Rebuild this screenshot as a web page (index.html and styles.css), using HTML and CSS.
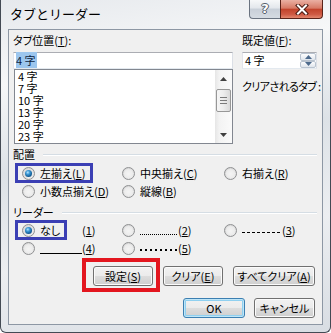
FILE: index.html
```html
<!DOCTYPE html>
<html lang="ja">
<head>
<meta charset="utf-8">
<title>タブとリーダー</title>
<link rel="stylesheet" href="styles.css">
</head>
<body>
<div class="window">
  <div class="titlebar">
    <div class="title">タブとリーダー</div>
    <div class="caption">
      <div class="cap-help">?</div>
      <div class="cap-close">
        <svg width="14" height="11" viewBox="0 0 14 11">
          <path d="M3 1.5 L11 9.5 M11 1.5 L3 9.5" stroke="#4a1a12" stroke-width="4" stroke-linecap="square"/>
          <path d="M3 1.5 L11 9.5 M11 1.5 L3 9.5" stroke="#ffffff" stroke-width="2" stroke-linecap="square"/>
        </svg>
      </div>
    </div>
  </div>
  <div class="client">
    <div class="top">
      <div class="col-left">
        <div class="lbl">タブ位置(<u>T</u>):</div>
        <div class="textbox"><span class="sel">4 字</span></div>
        <div class="listbox">
          <div class="items">
            <div class="item">4 字</div>
            <div class="item">7 字</div>
            <div class="item">10 字</div>
            <div class="item">13 字</div>
            <div class="item">20 字</div>
            <div class="item">23 字</div>
          </div>
          <div class="vscroll">
            <div class="sb-btn"><svg width="7" height="4" viewBox="0 0 7 4"><path d="M0 4 L3.5 0 L7 4 Z" fill="#404040"/></svg></div>
            <div class="sb-track">
              <div class="sb-thumb">
                <svg width="7" height="7" viewBox="0 0 7 7"><path d="M0 0.5 H7 M0 3.5 H7 M0 6.5 H7" stroke="#7a7a7a" stroke-width="1"/></svg>
              </div>
            </div>
            <div class="sb-btn"><svg width="7" height="4" viewBox="0 0 7 4"><path d="M0 0 L3.5 4 L7 0 Z" fill="#404040"/></svg></div>
          </div>
        </div>
      </div>
      <div class="col-right">
        <div class="lbl">既定値(<u>F</u>):</div>
        <div class="spin">
          <span class="spin-val">4 字</span>
          <div class="spin-btns">
            <div class="sp"><svg width="7" height="4" viewBox="0 0 7 4"><path d="M0 4 L3.5 0 L7 4 Z" fill="#4d6a8c"/></svg></div>
            <div class="sp"><svg width="7" height="4" viewBox="0 0 7 4"><path d="M0 0 L3.5 4 L7 0 Z" fill="#4d6a8c"/></svg></div>
          </div>
        </div>
        <div class="note">クリアされるタブ :</div>
      </div>
    </div>

    <div class="group-head"><span>配置</span><i class="rule"></i></div>
    <div class="opts">
      <div class="opt"><span class="radio on"></span><span>左揃え(<u>L</u>)</span></div>
      <div class="opt"><span class="radio"></span><span>中央揃え(<u>C</u>)</span></div>
      <div class="opt"><span class="radio"></span><span>右揃え(<u>R</u>)</span></div>
      <div class="opt"><span class="radio"></span><span>小数点揃え(<u>D</u>)</span></div>
      <div class="opt"><span class="radio"></span><span>縦線(<u>B</u>)</span></div>
    </div>

    <div class="group-head leader-head"><span>リーダー</span><i class="rule"></i></div>
    <div class="opts leader-opts">
      <div class="opt"><span class="radio on"></span><span><span class="ld none">なし</span>(<u>1</u>)</span></div>
      <div class="opt"><span class="radio"></span><span><span class="ld dots"></span>(<u>2</u>)</span></div>
      <div class="opt"><span class="radio"></span><span><span class="ld dashes"></span>(<u>3</u>)</span></div>
      <div class="opt"><span class="radio"></span><span><span class="ld under"></span>(<u>4</u>)</span></div>
      <div class="opt"><span class="radio"></span><span><span class="ld middots"></span>(<u>5</u>)</span></div>
    </div>

    <div class="btn-row row1">
      <div class="btn w60">設定(<u>S</u>)</div>
      <div class="btn w60">クリア(<u>E</u>)</div>
      <div class="btn w82">すべてクリア(<u>A</u>)</div>
    </div>
    <div class="btn-row row2">
      <div class="btn default w62">OK</div>
      <div class="btn w61">キャンセル</div>
    </div>

    <div class="mark blue mark-align"></div>
    <div class="mark blue mark-leader"></div>
    <div class="mark red mark-set"></div>
  </div>
</div>
</body>
</html>
```
FILE: styles.css
```css
html, body {
  margin: 0;
  padding: 0;
}
body {
  width: 331px;
  height: 333px;
  overflow: hidden;
  background: #ffffff;
  font-family: "Noto Sans CJK JP", "Liberation Sans", sans-serif;
  font-size: 11px;
  font-feature-settings: "palt";
  color: #000;
}
u {
  text-decoration: underline;
  text-underline-offset: 1px;
}

.window {
  box-sizing: border-box;
  width: 331px;
  height: 333px;
  border: 1px solid #434a54;
  border-top: none;
  border-radius: 0 0 6px 6px;
  background: linear-gradient(170deg, #e6e9ed 0%, #f6f7f8 22%, #dde2e7 45%, #eceef1 70%, #d8dde3 100%);
  display: flex;
  flex-direction: column;
}

.titlebar {
  flex: none;
  height: 29px;
  display: flex;
  justify-content: space-between;
  align-items: flex-start;
}
.title {
  padding-left: 9px;
  line-height: 28px;
  font-size: 13px;
  font-feature-settings: normal;
}
.caption {
  display: flex;
  margin-right: 7px;
}
.cap-help {
  box-sizing: border-box;
  width: 31px;
  height: 19px;
  border: 1px solid #6a7380;
  border-top: none;
  border-right: none;
  border-radius: 0 0 0 4px;
  background: linear-gradient(#f7f8f9 0%, #e3e7ec 45%, #c8cfd8 50%, #d5dbe2 100%);
  text-align: center;
  font-family: "DejaVu Sans", sans-serif;
  font-size: 13px;
  font-weight: bold;
  line-height: 18px;
  color: #ffffff;
  text-shadow: 0 0 1px #3f4752, 1px 0 0 #5b6470, -1px 0 0 #5b6470, 0 1px 0 #5b6470, 0 -1px 0 #5b6470;
}
.cap-close {
  box-sizing: border-box;
  width: 43px;
  height: 19px;
  border: 1px solid #5a2219;
  border-top: none;
  border-radius: 0 0 4px 0;
  background: linear-gradient(#eab0a3 0%, #d77a66 45%, #c2432c 52%, #cf5a44 80%, #e3876f 100%);
  display: flex;
  align-items: center;
  justify-content: center;
}

.client {
  flex: 1;
  position: relative;
  margin: 0 7px 7px 7px;
  border: 1px solid #8d97a4;
  background: #f0f0f0;
  padding: 3px 5px 0 4px;
}

.top {
  display: flex;
  gap: 9px;
}
.col-left {
  width: 220px;
}
.col-right {
  width: 75px;
}
.lbl {
  height: 19px;
  line-height: 15px;
  white-space: nowrap;
}
.textbox {
  box-sizing: border-box;
  height: 17px;
  border: 1px solid #abadb3;
  border-color: #abadb3 #dbdfe6 #e3e9ef #e2e3ea;
  background: #fff;
  padding-left: 2px;
  line-height: 15px;
}
.sel {
  background: #9cc6ee;
  color: #0c1d3f;
  padding-right: 1px;
}
.listbox {
  box-sizing: border-box;
  margin-left: 1px;
  width: 219px;
  height: 75px;
  border: 1px solid #828790;
  background: #fff;
  display: flex;
}
.items {
  flex: 1;
  padding-left: 3px;
}
.item {
  height: 12px;
  line-height: 12px;
}
.vscroll {
  width: 17px;
  display: flex;
  flex-direction: column;
  background: linear-gradient(90deg, #e6e6e6 0%, #f3f3f3 25%, #fafafa 100%);
}
.sb-btn {
  height: 17px;
  display: flex;
  align-items: center;
  justify-content: center;
}
.sb-track {
  flex: 1;
  padding-top: 2px;
}
.sb-thumb {
  box-sizing: border-box;
  margin: 0 1px;
  height: 23px;
  border: 1px solid #979797;
  border-radius: 2px;
  background: linear-gradient(90deg, #f6f6f6 0%, #ececec 50%, #d9d9d9 100%);
  display: flex;
  align-items: center;
  justify-content: center;
}

.spin {
  box-sizing: border-box;
  height: 17px;
  border: 1px solid #abadb3;
  border-color: #abadb3 #dbdfe6 #e3e9ef #e2e3ea;
  background: #fff;
  display: flex;
}
.spin-val {
  flex: 1;
  padding-left: 2px;
  line-height: 15px;
}
.spin-btns {
  width: 16px;
  display: flex;
  flex-direction: column;
}
.sp {
  flex: 1;
  box-sizing: border-box;
  border: 1px solid #b9c3cf;
  border-radius: 2px;
  background: linear-gradient(#fdfdfe, #dfe5ec);
  display: flex;
  align-items: center;
  justify-content: center;
}
.note {
  margin-top: 10px;
  line-height: 15px;
  white-space: nowrap;
  letter-spacing: -0.6px;
}

.group-head {
  display: flex;
  align-items: center;
  gap: 8px;
  height: 14px;
  line-height: 14px;
  margin-top: 3px;
}
.leader-head {
  margin-top: 5px;
}
.rule {
  flex: 1;
  height: 0;
  margin-top: 1px;
  border-top: 1px solid #d5dde4;
  border-bottom: 1px solid #ffffff;
}

.opts {
  display: grid;
  grid-template-columns: 100px 102px auto;
  grid-auto-rows: 18px;
  align-items: center;
  padding-left: 9px;
  margin-top: 3px;
}
.leader-opts {
  margin-top: 2px;
}
.opt {
  display: flex;
  align-items: center;
  gap: 5px;
  white-space: nowrap;
  line-height: 14px;
}
.radio {
  position: relative;
  box-sizing: border-box;
  flex: none;
  width: 13px;
  height: 13px;
  border-radius: 50%;
  border: 1px solid #8f9092;
  background: radial-gradient(circle at 60% 65%, #f6f6f6 0%, #e4e4e4 45%, #cfcfcf 100%);
}
.radio::after {
  content: "";
  position: absolute;
  left: 1px;
  top: 1px;
  width: 9px;
  height: 9px;
  border-radius: 50%;
  background: radial-gradient(circle at 50% 55%, #f4f4f4 0%, #ececec 60%, #dedede 100%);
}
.radio.on::after {
  left: 2px;
  top: 2px;
  width: 7px;
  height: 7px;
  background: radial-gradient(circle at 40% 35%, #b7e6ff 0%, #3d9ad6 30%, #135f98 65%, #0c3f6c 100%);
}

.ld {
  display: inline-block;
}
.ld.none {
  width: 42px;
}
.ld.dots {
  width: 38px;
  height: 1px;
  vertical-align: baseline;
  background: repeating-linear-gradient(90deg, #000 0 1px, transparent 1px 2px);
}
.ld.dashes {
  width: 40px;
  height: 1px;
  vertical-align: middle;
  background: repeating-linear-gradient(90deg, #000 0 3px, transparent 3px 5px);
}
.ld.under {
  width: 42px;
  height: 1px;
  vertical-align: -1px;
  background: #000;
}
.ld.middots {
  width: 38px;
  height: 2px;
  vertical-align: middle;
  background: repeating-linear-gradient(90deg, #000 0 2px, transparent 2px 5px);
}

.btn-row {
  display: flex;
  justify-content: flex-end;
  padding-right: 2px;
}
.row1 {
  margin-top: 9px;
  gap: 10px;
}
.row2 {
  margin-top: 12px;
  gap: 9px;
}
.btn {
  box-sizing: border-box;
  height: 20px;
  border: 1px solid #707070;
  border-radius: 3px;
  background: linear-gradient(#f2f2f2 0%, #ebebeb 50%, #dddddd 50%, #cfcfcf 100%);
  box-shadow: inset 0 0 0 1px #fbfbfb;
  text-align: center;
  line-height: 18px;
  white-space: nowrap;
}
.btn.default {
  border-color: #3c7fb1;
  box-shadow: inset 0 0 0 1px #bfe6f8, inset 0 0 0 2px #8fd0f0;
}
.w60 { width: 60px; }
.w61 { width: 61px; }
.w62 { width: 62px; }
.w82 { width: 82px; }

.mark {
  position: absolute;
  box-sizing: border-box;
}
.mark.blue {
  border: 3px solid #3b3fb4;
}
.mark.red {
  border: 4px solid #e3161f;
}
.mark-align {
  left: 6px;
  top: 133px;
  width: 78px;
  height: 20px;
}
.mark-leader {
  left: 6px;
  top: 190px;
  width: 52px;
  height: 20px;
}
.mark-set {
  left: 73px;
  top: 228px;
  width: 78px;
  height: 34px;
}
```
